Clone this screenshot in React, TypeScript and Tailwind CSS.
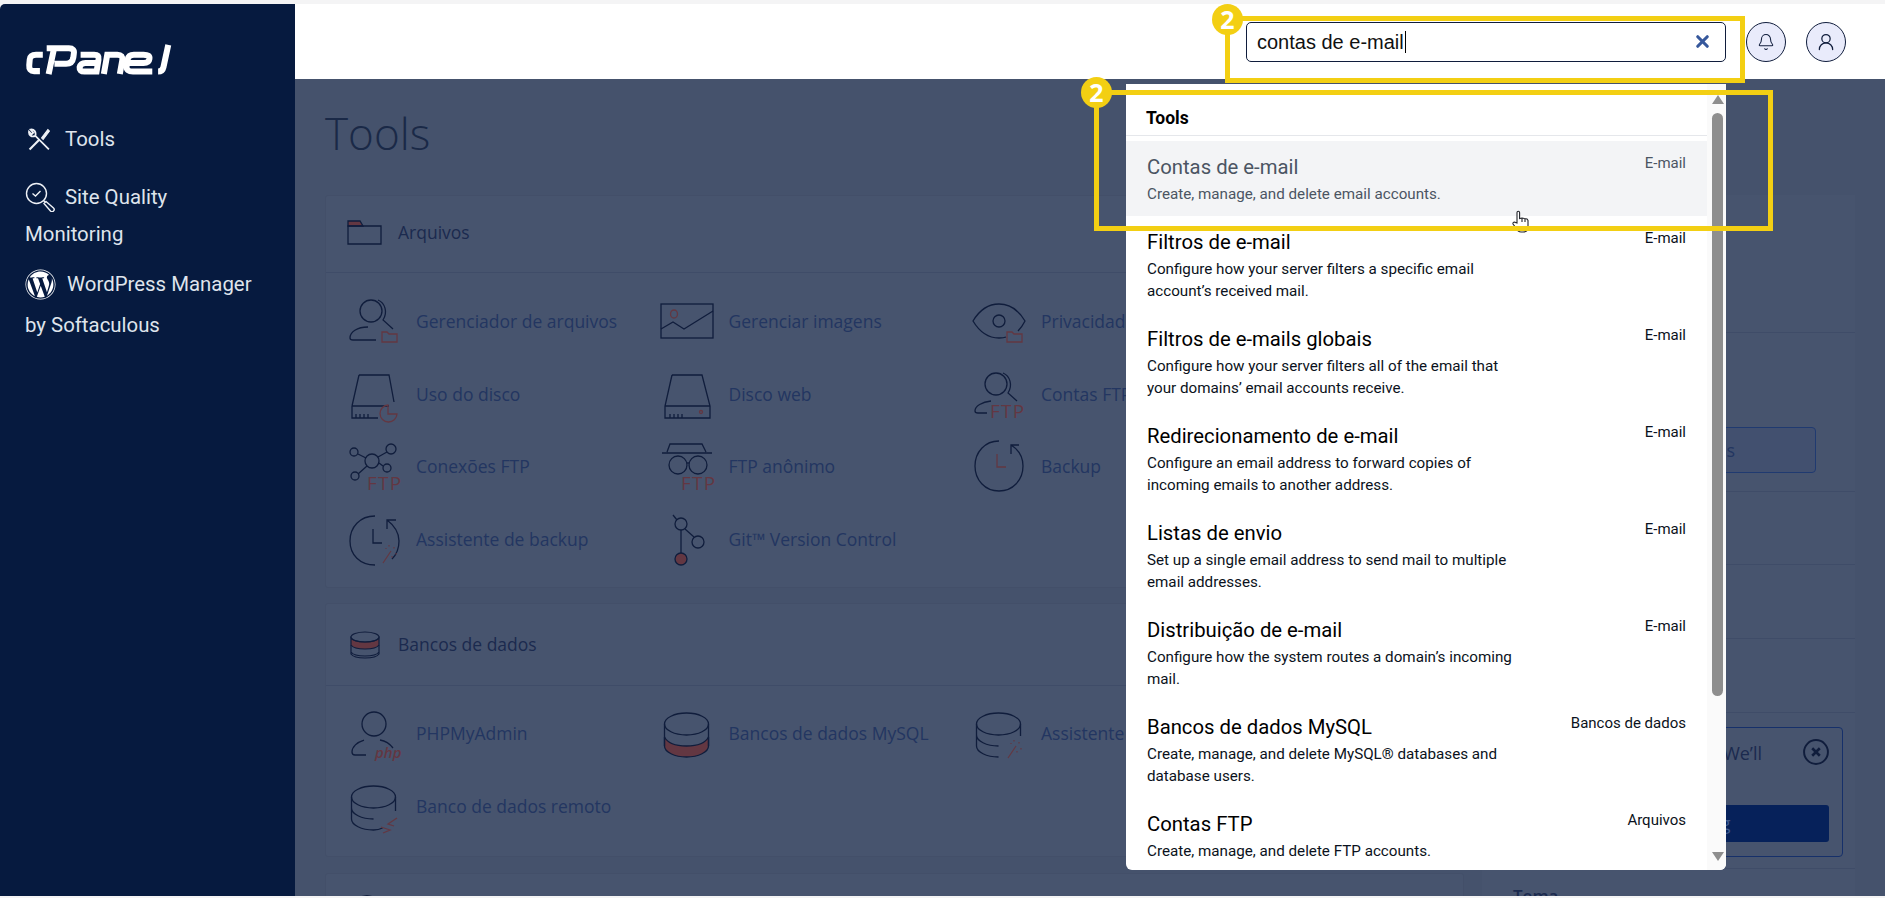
import type { ReactNode } from "react";
import { Bell, UserRound, X } from "lucide-react";
import { FaWordpress } from "react-icons/fa";

const INK = "#101d3c";
const RED = "#633742";

const results = [
  { title: "Contas de e-mail", desc: "Create, manage, and delete email accounts.", cat: "E-mail", active: true },
  { title: "Filtros de e-mail", desc: "Configure how your server filters a specific email account’s received mail.", cat: "E-mail" },
  { title: "Filtros de e-mails globais", desc: "Configure how your server filters all of the email that your domains’ email accounts receive.", cat: "E-mail" },
  { title: "Redirecionamento de e-mail", desc: "Configure an email address to forward copies of incoming emails to another address.", cat: "E-mail" },
  { title: "Listas de envio", desc: "Set up a single email address to send mail to multiple email addresses.", cat: "E-mail" },
  { title: "Distribuição de e-mail", desc: "Configure how the system routes a domain’s incoming mail.", cat: "E-mail" },
  { title: "Bancos de dados MySQL", desc: "Create, manage, and delete MySQL® databases and database users.", cat: "Bancos de dados" },
  { title: "Contas FTP", desc: "Create, manage, and delete FTP accounts.", cat: "Arquivos" },
];

const fileTools = [
  { icon: "userFolder", label: "Gerenciador de arquivos" },
  { icon: "image", label: "Gerenciar imagens" },
  { icon: "eye", label: "Privacidade do diretório" },
  { icon: "diskUsage", label: "Uso do disco" },
  { icon: "disk", label: "Disco web" },
  { icon: "userFtp", label: "Contas FTP" },
  { icon: "nodes", label: "Conexões FTP" },
  { icon: "anon", label: "FTP anônimo" },
  { icon: "backup", label: "Backup" },
  { icon: "backupWizard", label: "Assistente de backup" },
  { icon: "git", label: "Git™ Version Control" },
];

const dbTools = [
  { icon: "php", label: "PHPMyAdmin" },
  { icon: "mysql", label: "Bancos de dados MySQL" },
  { icon: "dbWizard", label: "Assistente do MySQL" },
  { icon: "dbRemote", label: "Banco de dados remoto" },
];

const Wand = () => (
  <g stroke={RED} fill="none" strokeWidth="1.2">
    <path d="M35 54 L43 42" />
    <path d="M41 36v2M46 38v2M48 44v2M44 47v2M38 39v1" strokeDasharray="1.5 1.5" />
  </g>
);

const FtpLabel = ({ x, y }: { x: number; y: number }) => (
  <text x={x} y={y} fill={RED} stroke="none" fontFamily="Open Sans" fontWeight="400" fontSize="19" letterSpacing="1.2">
    FTP
  </text>
);

// line icons of the tool grid, all drawn on one 50x60 box
const shapes: Record<string, ReactNode> = {
  userFolder: (
    <>
      <circle cx="23" cy="20" r="11" />
      <path d="M30 9c7 3 10 12 5 20l10 9M20 36C9 36 2 41 2 47c0 1 1 2 3 2h23" />
      <path d="M34 41h5l2 2h8v8H34z" stroke={RED} />
    </>
  ),
  image: (
    <>
      <rect x="0" y="13" width="52" height="34" />
      <path d="M0 38l12-7 11 7 29-18" />
      <ellipse cx="13" cy="23" rx="3.5" ry="4" stroke={RED} />
    </>
  ),
  eye: (
    <>
      <path d="M33 46c-2 1-5 1-7 1C15 47 6 40 0 30 6 20 15 13 26 13s20 7 26 17c-2 4-4 7-7 10" />
      <circle cx="26" cy="30" r="6" />
      <path d="M34 41h5l2 2h8v8H34z" stroke={RED} />
    </>
  ),
  diskUsage: (
    <>
      <path d="M11 11H41L46 38M4 42L11 11M4 42H41M4 42V54H30M8 54v-4M12 54v-4M16 54v-4M20 54v-4" />
      <path d="M40 41a8.5 8.5 0 1 0 9 9h-9z" stroke={RED} />
    </>
  ),
  disk: (
    <>
      <path d="M11 11H41L49 42V54H4V42L11 11M4 42H49M9 54v-4M13 54v-4M17 54v-4M21 54v-4" />
      <circle cx="40" cy="48" r="1.5" stroke={RED} />
    </>
  ),
  userFtp: (
    <>
      <circle cx="23" cy="20" r="11" />
      <path d="M30 9c7 3 10 12 5 20l9 8M18 37C9 38 2 42 2 47c0 1 1 2 3 2h9" />
      <FtpLabel x={17} y={54} />
    </>
  ),
  nodes: (
    <>
      <circle cx="24" cy="25" r="7" />
      <circle cx="6" cy="16" r="4" />
      <circle cx="43" cy="13" r="5" />
      <circle cx="39" cy="32" r="4" />
      <circle cx="7" cy="40" r="4" />
      <path d="M10 18l8 4M30 21l9-5M31 27l4 3M19 30l-9 8" />
      <FtpLabel x={19} y={54} />
    </>
  ),
  anon: (
    <>
      <path d="M1 17H51M6 16L9 8H41L45 16" />
      <circle cx="17" cy="29" r="9" />
      <circle cx="37" cy="29" r="9" />
      <path d="M26 27h2" />
      <FtpLabel x={20} y={54} />
    </>
  ),
  backup: (
    <>
      <path d="M26 5C12 5 2 16 2 30s10 25 24 25 24-11 24-25c0-9-4-16-12-21M38 18V9h8" />
      <path d="M24 18V31H33" stroke={RED} />
    </>
  ),
  backupWizard: (
    <>
      <path d="M27 7C12 7 2 18 2 32s10 24 25 24M44 50c5-5 7-11 7-18 0-8-4-15-12-21M39 20v-9h9" />
      <path d="M25 20V34H34" />
      <Wand />
    </>
  ),
  git: (
    <>
      <circle cx="20" cy="15" r="6" />
      <circle cx="37" cy="33" r="6" />
      <circle cx="20" cy="50" r="6" fill={RED} />
      <path d="M12 6l4 5M20 21V44M24 20l9 8" />
    </>
  ),
  php: (
    <>
      <ellipse cx="26" cy="20" rx="12" ry="12" />
      <path d="M16 36C9 38 4 43 4 48c0 2 1 3 3 3h11M32 36c6 1 10 4 13 8" />
      <text x="27" y="54" fill={RED} stroke="none" fontFamily="Open Sans" fontStyle="italic" fontSize="15" fontWeight="600">
        php
      </text>
    </>
  ),
  mysql: (
    <>
      <path d="M3.5 33v9c0 6 10 11 22 11s22-5 22-11v-9c-3 6-12 9-22 9s-19-3-22-9z" fill={RED} />
      <ellipse cx="25.5" cy="20" rx="22" ry="11" />
      <path d="M3.5 20v22M47.5 20v22" />
    </>
  ),
  dbWizard: (
    <>
      <ellipse cx="25.5" cy="20" rx="22" ry="11" />
      <path d="M47.5 20v12M3.5 20v22c0 6 10 11 22 11M3.5 31c0 6 10 11 22 11" />
      <Wand />
    </>
  ),
  dbRemote: (
    <>
      <ellipse cx="25.5" cy="20" rx="22" ry="11" />
      <path d="M47.5 20v14M3.5 20v22c0 6 10 11 22 11 4 0 7-1 9-2M3.5 31c0 6 10 11 22 11" />
      <path d="M49 41l-9 6 6 2M33 50l9 3-7 3" stroke={RED} />
    </>
  ),
};

function ToolIcon({ name }: { name: string }) {
  return (
    <svg viewBox="0 0 50 60" fill="none" stroke={INK} strokeWidth="1.3" className="h-[60px] w-[50px] shrink-0 overflow-visible">
      {shapes[name]}
    </svg>
  );
}

function ToolItem({ icon, label }: { icon: string; label: string }) {
  return (
    <a className="flex items-center gap-[18px] whitespace-nowrap text-[17.5px] text-[#233661]">
      <ToolIcon name={icon} />
      {label}
    </a>
  );
}

function Card({ icon, title, className, headerClass, children }: { icon: ReactNode; title: string; className?: string; headerClass: string; children?: ReactNode }) {
  return (
    <section className={`rounded-[3px] border border-[#434f69] bg-[#47546e] ${className ?? ""}`}>
      <header className={`flex items-center border-b border-[#3f4c68] pl-[21px] text-[17.5px] text-[#1b2a4e] ${headerClass}`}>
        <span className="mr-[16px] flex w-[35px] justify-center">{icon}</span>
        {title}
      </header>
      {children}
    </section>
  );
}

function Annotation({ className }: { className: string }) {
  return <div className={`pointer-events-none absolute border-[5px] border-[#f3cf13] ${className}`} />;
}

function Badge({ className }: { className: string }) {
  return (
    <div className={`absolute flex h-[31px] w-[31px] items-center justify-center rounded-full bg-[#f3cf13] font-['Open_Sans',sans-serif] text-[25px] leading-none font-bold text-white ${className}`}>
      2
    </div>
  );
}

export default function App() {
  return (
    <div className="relative flex h-screen w-full flex-col overflow-hidden bg-[#f4f4f5] pt-[4px] pb-[2px] font-['Roboto',sans-serif]">
      <div className="flex min-h-0 flex-1">
        {/* Sidebar */}
        <aside className="flex w-[295px] shrink-0 flex-col rounded-tl-[5px] bg-[#061a3f] pl-[25px] text-[20.4px] text-[#dfe4ec]">
          <svg viewBox="0 0 150 32" fill="none" stroke="#fff" strokeWidth="6.2" className="mt-[40px] h-[31px] w-[148px] shrink-0">
            <path d="M17 11H10Q4 11 3.500 16L3 22Q2.500 28 8 28H14" />
            <path d="M23 31L28.500 5M21 4.500H44Q50 4.500 49 10L48.500 14Q47.500 20.500 41 20.500H29" />
            <path d="M56 11H70Q75.500 11 74.500 16L72.500 28.500H60Q54.500 28.500 55 24Q56 19.500 61 19.500H73" />
            <path d="M80 31L83.500 11H94Q100 11 99 17L96.500 31" />
            <path d="M130 28.500H110Q103 28.500 103.500 23L104.500 16Q105.500 11 111 11H121Q128 11 127 15.500Q126.500 19.500 121 19.500H105" />
            <path d="M146.500 1L141.500 24Q140.500 28.500 136 28.500" />
          </svg>
          <div className="mt-[52px] flex h-[24px] items-center">
            <svg viewBox="0 0 22 22" fill="none" stroke="#eef1f6" strokeWidth="2" className="mr-[14px] ml-[3px] h-[23px] w-[23px]">
              <path d="M1.500 20.500L11 11" />
              <path d="M13 9.500L19 1.500l1.500 1.500-6 8z" fill="#eef1f6" strokeWidth="1" />
              <path d="M20 20.500L7 7.500C8 4 6 1 2.500 1.500L5 4.500 3.500 6 1 3.500C0.500 7 3.500 9 7 7.500" strokeWidth="1.700" />
            </svg>
            Tools
          </div>
          <div className="mt-[30px] flex h-[32px] items-center">
            <svg viewBox="0 0 30 30" fill="none" stroke="#eef1f6" strokeWidth="1.400" className="mr-[10px] h-[30px] w-[30px]">
              <circle cx="11.500" cy="11.500" r="10" />
              <path d="M7.500 11.500l3 2.500 5-5" />
              <path d="M18.500 18.500l2 2M21 19.500l7.500 6.500a2 2 0 0 1-3 3l-6.500-7.500z" />
            </svg>
            Site Quality
          </div>
          <div className="mt-[6px] flex h-[30px] items-center">Monitoring</div>
          <div className="mt-[19px] flex h-[32px] items-center">
            <FaWordpress className="mr-[11px] h-[31px] w-[31px] text-white" />
            WordPress Manager
          </div>
          <div className="mt-[10px] flex h-[30px] items-center">by Softaculous</div>
        </aside>

        <div className="flex min-w-0 flex-1 flex-col">
          {/* Top bar */}
          <header className="flex h-[75px] shrink-0 items-center justify-end gap-5 bg-white pr-[39px]">
            <div className="flex h-[40px] w-[480px] items-center justify-between rounded-[5px] border border-[#101d3c] pr-[13px] pl-[10px] font-['Liberation_Sans',sans-serif] text-[20px] text-[#111]">
              <span className="flex items-center">
                contas de e-mail
                <span className="ml-px h-[22px] w-px bg-black" />
              </span>
              <X size={19} strokeWidth={4} className="text-[#36589c]" />
            </div>
            <div className="flex h-[40px] w-[40px] items-center justify-center rounded-full border border-[#101d3c] bg-[#e9ebfb]">
              <Bell size={18} strokeWidth={1.4} className="text-[#101d3c]" />
            </div>
            <div className="flex h-[40px] w-[40px] items-center justify-center rounded-full border border-[#101d3c] bg-[#e9ebfb]">
              <UserRound size={20} strokeWidth={1.5} className="text-[#101d3c]" />
            </div>
          </header>

          {/* Dimmed page */}
          <main className="min-h-0 flex-1 overflow-hidden bg-[#45526c] pl-[30px] font-['Open_Sans',sans-serif]">
            <h1 className="mt-[24px] h-[92px] text-[44px] leading-[60px] font-light text-[#1a2947]">Tools</h1>
            <div className="flex items-start gap-[18px]">
              <div className="w-[1139px] shrink-0">
                <Card
                  title="Arquivos"
                  headerClass="h-[77px] pb-[4px]"
                  icon={
                    <svg viewBox="0 0 35 25" fill="none" stroke={INK} strokeWidth="1.300" className="h-[25px] w-[35px]">
                      <path d="M1 6V1H13L16 6z" fill={RED} />
                      <path d="M1 6H34V24H1z" />
                    </svg>
                  }
                >
                  <div className="grid grid-cols-[repeat(3,312.5px)] auto-rows-[72.5px] pt-[12px] pb-[12px] pl-[22px]">
                    {fileTools.map((tool) => (
                      <ToolItem key={tool.label} {...tool} />
                    ))}
                  </div>
                </Card>
                <Card
                  className="mt-[15px]"
                  title="Bancos de dados"
                  headerClass="h-[82px]"
                  icon={
                    <svg viewBox="0 0 30 28" fill="none" stroke={INK} strokeWidth="1.200" className="h-[28px] w-[30px]">
                      <path d="M1 7v7c2 3 8 4 14 4s12-1 14-4V7c-2 3-8 4-14 4S3 10 1 7z" fill={RED} />
                      <ellipse cx="15" cy="6" rx="14" ry="5" />
                      <path d="M1 14v7c2 3 8 4 14 4s12-1 14-4v-7M1 21v2c2 3 8 4 14 4s12-1 14-4v-2" />
                    </svg>
                  }
                >
                  <div className="grid grid-cols-[repeat(3,312.5px)] auto-rows-[73px] pt-[11px] pb-[13px] pl-[22px]">
                    {dbTools.map((tool) => (
                      <ToolItem key={tool.label} {...tool} />
                    ))}
                  </div>
                </Card>
                <section className="mt-[16px] h-[60px] rounded-[3px] border border-[#434f69] bg-[#47546e] pt-[21px] pl-[27px]">
                  <div className="h-[28px] w-[28px] rounded-full border-[1.5px] border-[#101d3c]" />
                </section>
              </div>

              {/* Right column, mostly behind the results menu */}
              <aside className="w-[373px] shrink-0 bg-[#47546e] text-[#233661]">
                <div className="h-[138px] border-b border-[#3f4c68]" />
                <div className="flex h-[159px] items-start border-b border-[#3f4c68] pt-[94px] pl-[30px]">
                  <div className="flex h-[46px] w-[304px] items-center justify-end rounded-[4px] border border-[#203a70] bg-[#42506f] pr-[80px] text-[18px] whitespace-nowrap">
                    Ver estatísticas
                  </div>
                </div>
                <div className="h-[73px] border-b border-[#3f4c68]" />
                <div className="h-[74px] border-b border-[#3f4c68]" />
                <div className="h-[74px] border-b border-[#3f4c68]" />
                <div className="h-[156px] border-b border-[#3f4c68] pt-[14px] pl-[13px]">
                  <div className="flex h-[130px] w-[348px] flex-col rounded-[4px] border border-[#16306a] px-[13px] pt-[12px]">
                    <div className="flex h-[25px] items-start justify-between text-[18px] whitespace-nowrap text-[#1b2a4e]">
                      <span className="ml-auto">We’ll</span>
                      <svg viewBox="0 0 24 24" fill="none" stroke={INK} className="-mt-[1px] ml-[41px] h-[26px] w-[26px] shrink-0">
                        <circle cx="12" cy="12" r="11" strokeWidth="1.800" />
                        <path d="M8.500 8.500l7 7M15.500 8.500l-7 7" strokeWidth="2.400" />
                      </svg>
                    </div>
                    <div className="mt-[40px] flex h-[37px] items-center justify-center rounded-[3px] bg-[#06215a] pr-[26px] text-[18px] whitespace-nowrap text-[#3f5a8f]">
                      Start User Testing
                    </div>
                  </div>
                </div>
                <div className="pt-[14px] pl-[31px] text-[17px] font-semibold text-[#1b2a4e]">Tema</div>
              </aside>
            </div>
          </main>
        </div>
      </div>

      {/* Search results menu */}
      <div className="absolute top-[84px] left-[1126px] flex h-[786px] w-[600px] overflow-hidden rounded-b-[6px] bg-white">
        <div className="min-w-0 flex-1">
          <div className="border-b border-[#e5e7eb] pt-[22px] pb-[5px] pl-[20px] text-[17.5px] leading-[24px] font-bold text-black">Tools</div>
          <ul className="mt-[5px]">
            {results.map((item) => (
              <li
                key={item.title}
                className={`flex justify-between py-[11px] pr-[21px] pl-[21px] ${item.active ? "bg-[#f3f4f6] text-[#4b5563]" : "text-[#0b1220]"}`}
              >
                <div className="w-[375px]">
                  <div className={`mb-px text-[20.3px] leading-[30px] ${item.active ? "" : "text-black"}`}>{item.title}</div>
                  <div className="text-[15.2px] leading-[22px]">{item.desc}</div>
                </div>
                <div className="text-[15px] leading-[22px]">{item.cat}</div>
              </li>
            ))}
          </ul>
        </div>
        <div className="flex w-[19px] shrink-0 flex-col items-center bg-[#fafafa] pt-[11px] pr-[1px] pl-[3px]">
          <div className="h-0 w-0 border-x-[6px] border-b-[9px] border-x-transparent border-b-[#8e8e8e]" />
          <div className="mt-[9px] h-[583px] w-[11px] shrink-0 rounded-full bg-[#8e8e8e]" />
          <div className="mt-[156px] h-0 w-0 border-x-[6px] border-t-[9px] border-x-transparent border-t-[#8e8e8e]" />
        </div>
      </div>

      {/* Mouse pointer, sits under the annotation frame */}
      <svg viewBox="0 0 17 23" fill="#fff" stroke="#23252b" strokeWidth="1.100" className="absolute top-[210px] left-[1512px] h-[23px] w-[17px]">
        <path d="M5 13V2.500a1.300 1.300 0 0 1 2.600 0V8.500l2.400-.5 2.300.5 2.700.5 1 1.500V17c0 3-2 5-5 5H9c-3 0-4-2-5-4L1 14c-.500-1.500 1.500-2.500 2.500-1.500z" />
        <path d="M10 8v4M13 9v3" />
      </svg>

      <Annotation className="top-[16px] left-[1225px] h-[67px] w-[520px]" />
      <Annotation className="top-[90px] left-[1094px] h-[141px] w-[679px]" />
      <Badge className="top-[4px] left-[1212px]" />
      <Badge className="top-[77px] left-[1081px]" />
    </div>
  );
}
